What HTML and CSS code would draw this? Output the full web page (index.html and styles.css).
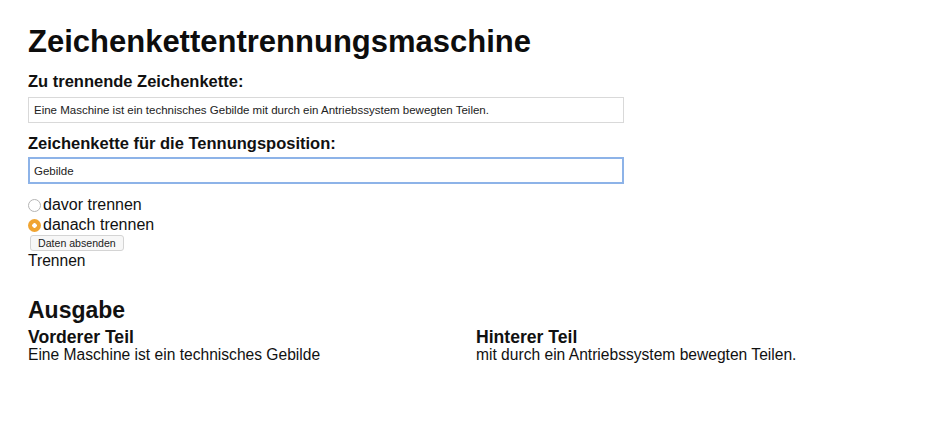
FILE: index.html
```html
<!DOCTYPE html>
<html lang="de">
<head>
<meta charset="utf-8">
<title>Zeichenkettentrennungsmaschine</title>
<link rel="stylesheet" href="styles.css">
</head>
<body>
<main class="page">
  <h1 class="title">Zeichenkettentrennungsmaschine</h1>
  <form class="form">
    <label class="label" for="text">Zu trennende Zeichenkette:</label>
    <input class="field" id="text" type="text" value="Eine Maschine ist ein technisches Gebilde mit durch ein Antriebssystem bewegten Teilen.">
    <label class="label" for="pos">Zeichenkette für die Tennungsposition:</label>
    <input class="field field-focus" id="pos" type="text" value="Gebilde">
    <div class="options">
      <label class="option"><input class="radio" type="radio" name="mode" value="davor">davor trennen</label>
      <label class="option"><input class="radio" type="radio" name="mode" value="danach" checked>danach trennen</label>
    </div>
    <button class="submit" type="button">Daten absenden</button>
    <div class="action">Trennen</div>
  </form>
  <section class="output">
    <h2 class="output-title">Ausgabe</h2>
    <div class="parts">
      <div class="part">
        <h3 class="part-title">Vorderer Teil</h3>
        <div class="part-text">Eine Maschine ist ein technisches Gebilde</div>
      </div>
      <div class="part">
        <h3 class="part-title">Hinterer Teil</h3>
        <div class="part-text">mit durch ein Antriebssystem bewegten Teilen.</div>
      </div>
    </div>
  </section>
</main>
</body>
</html>
```

FILE: styles.css
```css
html, body {
  margin: 0;
  padding: 0;
  background: #ffffff;
}

body {
  font-family: "Liberation Sans", Arial, Helvetica, sans-serif;
  color: #111111;
  font-size: 15.6px;
}

.page {
  padding: 24px 4px 0 28px;
  width: 896px;
}

.title {
  margin: 0;
  font-size: 31px;
  line-height: 36px;
  font-weight: bold;
  color: #0d0d0d;
}

.form {
  display: flex;
  flex-direction: column;
  align-items: flex-start;
  margin-top: 12px;
}

.label {
  font-weight: bold;
  font-size: 16.5px;
  line-height: 19px;
  margin-bottom: 6px;
}

.label + .field-focus {
  margin-top: -2px;
}

.field {
  box-sizing: border-box;
  width: 596px;
  height: 26px;
  margin: 0 0 11px 0;
  padding: 0 5px;
  border: 1px solid #d9d9d9;
  font-family: "Liberation Sans", Arial, sans-serif;
  font-size: 11.5px;
  color: #222;
  background: #fff;
  outline: none;
}

.field-focus {
  border: 2px solid #8db3e8;
  padding: 0 4px;
  height: 27px;
  margin-bottom: 11px;
}

.options {
  display: flex;
  flex-direction: column;
}

.option {
  display: flex;
  align-items: center;
  height: 20px;
  font-size: 16px;
}

.radio {
  appearance: none;
  -webkit-appearance: none;
  width: 13px;
  height: 13px;
  margin: 1px 2px 0 0;
  border-radius: 50%;
  border: 1px solid #b5b5b5;
  background: #fff;
  box-sizing: border-box;
}

.radio:checked {
  border: none;
  background: radial-gradient(circle, #ffffff 0 2px, #f0a431 2.5px);
}

.submit {
  margin: 0 0 0 2px;
  padding: 0 7px;
  height: 16px;
  font-family: "Liberation Sans", Arial, sans-serif;
  font-size: 10.6px;
  line-height: 14px;
  color: #222;
  background: #f7f7f7;
  border: 1px solid #d4d4d4;
  border-radius: 3px;
}

.action {
  font-size: 15.6px;
  line-height: 19px;
}

.output {
  margin-top: 27px;
}

.output-title {
  margin: 0;
  font-size: 23px;
  line-height: 27px;
  font-weight: bold;
}

.parts {
  display: grid;
  grid-template-columns: 448px 448px;
  margin-top: 4px;
}

.part-title {
  margin: 0;
  font-size: 17.6px;
  line-height: 18px;
  font-weight: bold;
}

.part-text {
  font-size: 15.6px;
  line-height: 17px;
}
```
